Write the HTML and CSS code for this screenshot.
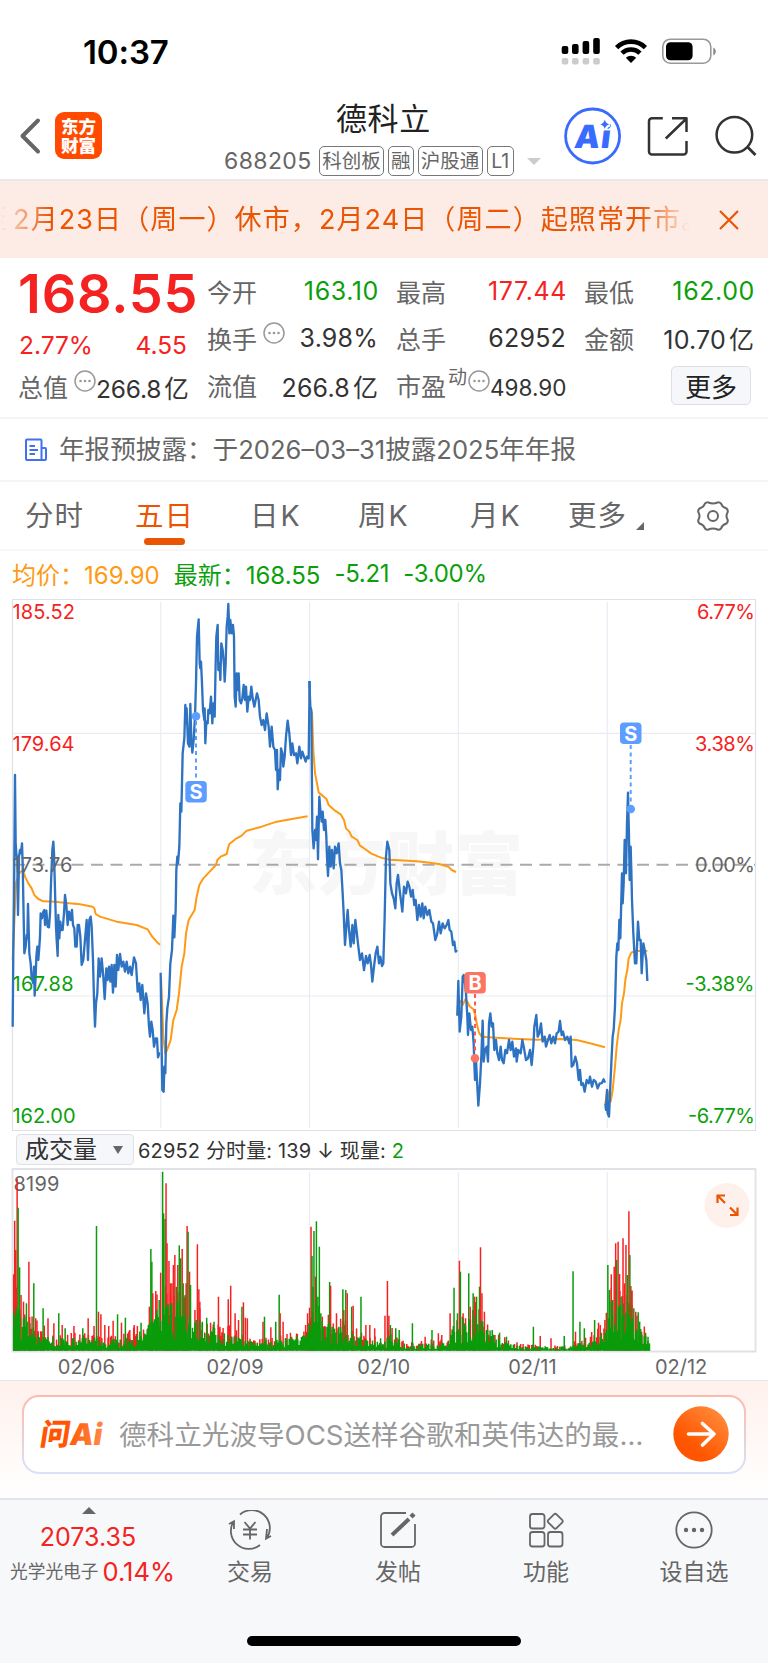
FILE: index.html
```html
<!DOCTYPE html>
<html lang="zh-CN">
<head>
<meta charset="utf-8">
<title>德科立 688205</title>
<link rel="stylesheet" href="styles.css">
</head>
<body>
<div class="status">
  <span class="clock">10:37</span>
  <svg class="status-icons" width="156" height="30" viewBox="0 0 156 30">
    <g fill="#000"><rect x="0.7" y="9" width="6.6" height="8" rx="2"/><rect x="11" y="7" width="6.6" height="10" rx="2"/><rect x="21.6" y="4" width="6.6" height="13" rx="2"/><rect x="32.2" y="1" width="6.6" height="16" rx="2"/></g>
    <g fill="#ccc"><rect x="0.7" y="21" width="6.6" height="6.6" rx="2"/><rect x="11" y="21" width="6.6" height="6.6" rx="2"/><rect x="21.6" y="21" width="6.6" height="6.6" rx="2"/><rect x="32.2" y="21" width="6.6" height="6.6" rx="2"/></g>
    <g fill="none" stroke="#000" stroke-width="4.6"><path d="M55.6 10.6a20.4 20.4 0 0 1 28.8 0"/><path d="M61 16.2a12.8 12.8 0 0 1 18 0"/></g>
    <path d="M70 26l-5.2-5.2a7.4 7.4 0 0 1 10.4 0z"/>
    <rect x="101.8" y="2.2" width="48" height="24" rx="7.5" fill="none" stroke="#999" stroke-width="1.6"/>
    <rect x="105" y="5.3" width="26.6" height="18" rx="4.5"/>
    <path d="M152.3 10.5c3.3 1.5 3.3 6.500 0 8z" fill="#888"/>
  </svg>
</div>

<header class="head">
  <svg class="back" width="24" height="38" viewBox="0 0 24 38"><path d="M19 3.500L3.500 19L19 34.500" fill="none" stroke="#666" stroke-width="4" stroke-linecap="round" stroke-linejoin="round"/></svg>
  <div class="brand"><span>东方</span><span>财富</span></div>
  <div class="title">
    <h1>德科立</h1>
    <div class="sub"><span class="code">688205</span><span class="tag">科创板</span><span class="tag t1">融</span><span class="tag">沪股通</span><span class="tag t2">L1</span><i class="caret"></i></div>
  </div>
  <svg class="head-icons" width="200" height="60" viewBox="0 0 200 60">
    <circle cx="34.600" cy="30" r="27" fill="none" stroke="#3a6bff" stroke-width="2.800"/>
    <g transform="translate(15.500 41.500) skewX(-7)"><text class="ai-text" x="0" y="0" textLength="36">Ai</text></g>
    <path d="M46.800 13.500q.9 3.900 4.600 4.800q-3.700.9-4.600 4.800q-.9-3.900-4.600-4.800q3.700-.9 4.600-4.800z" fill="#3a6bff" stroke="#fff" stroke-width="4.500" paint-order="stroke"/>
    <g fill="none" stroke="#333" stroke-width="2.500" stroke-linejoin="round"><path d="M104.800 12.300H94a3 3 0 0 0-3 3V45.500a3 3 0 0 0 3 3h31.500a3 3 0 0 0 3-3V35"/><path d="M114 12.300h14.500V26M128 13L107.800 32.500"/></g>
    <circle cx="176.400" cy="28.700" r="17.800" fill="none" stroke="#333" stroke-width="2.500"/><path d="M189 40.500l8.500 8.500" stroke="#333" stroke-width="2.800"/>
  </svg>
</header>

<div class="notice">
  <div class="marquee"><span class="lead">至</span>2月23日（周一）休市，2月24日（周二）起照常开市。</div>
  <svg width="22" height="22" viewBox="0 0 22 22"><path d="M2 2L20 20M20 2L2 20" stroke="#ea5504" stroke-width="2.200"/></svg>
</div>

<section class="quote">
  <div class="col main">
    <div class="price">168.55</div>
    <div class="chg"><span>2.77%</span><span>4.55</span></div>
    <div class="row"><label>总值</label><svg class="dots d1" viewBox="0 0 22 22"><use href="#more"/></svg><b class="tight">266.8<em>亿</em></b></div>
  </div>
  <div class="col">
    <div class="row"><label>今开</label><b class="g">163.10</b></div>
    <div class="row"><label>换手</label><svg class="dots d2" viewBox="0 0 22 22"><use href="#more"/></svg><b>3.98%</b></div>
    <div class="row"><label>流值</label><b>266.8<em>亿</em></b></div>
  </div>
  <div class="col">
    <div class="row"><label>最高</label><b class="r">177.44</b></div>
    <div class="row"><label>总手</label><b>62952</b></div>
    <div class="row"><label>市盈</label><sup>动</sup><svg class="dots d3" viewBox="0 0 22 22"><use href="#more"/></svg><b class="small">498.90</b></div>
  </div>
  <div class="col">
    <div class="row"><label>最低</label><b class="g">162.00</b></div>
    <div class="row"><label>金额</label><b>10.70<em>亿</em></b></div>
    <div class="row end"><button class="more">更多</button></div>
  </div>
  <svg width="0" height="0" class="defs"><symbol id="more" viewBox="0 0 22 22"><circle cx="11" cy="11" r="10" fill="none" stroke="#999" stroke-width="1.500"/><g fill="#999"><circle cx="6.500" cy="11" r="1.300"/><circle cx="11" cy="11" r="1.300"/><circle cx="15.500" cy="11" r="1.300"/></g></symbol></svg>
</section>

<div class="report">
  <svg width="24" height="24" viewBox="0 0 24 24" fill="none" stroke="#4370ee" stroke-width="2"><path d="M17.500 22V2.500a1 1 0 0 0-1-1H3a1 1 0 0 0-1 1V21a1 1 0 0 0 1 1H21a1 1 0 0 0 1-1V11a1 1 0 0 0-1-1H17.500"/><path d="M5.500 8H11M5.500 12H14M5.500 16H11"/></svg>
  <span>年报预披露：于2026–03–31披露2025年年报</span>
</div>

<nav class="tabs">
  <span class="w1">分时</span><span class="w2 on">五日</span><span class="w3">日K</span><span class="w4">周K</span><span class="w5">月K</span><span class="w6">更多<i></i></span>
  <svg width="34" height="34" viewBox="-17 -17 34 34" fill="none" stroke="#666" stroke-width="2"><circle r="5"/><path stroke-linejoin="round" d="M-4.500-13.500Q0-11.500 4.500-13.500Q6-14.500 8-12.500Q9.500-8.500 13.500-7.500Q15.500-5.500 14.500-3.500Q12.500 0 14.500 3.500Q15.500 5.500 13.500 7.500Q9.500 8.500 8 12.500Q6 14.500 4.500 13.500Q0 11.500-4.500 13.500Q-6 14.500-8 12.500Q-9.500 8.500-13.500 7.500Q-15.500 5.500-14.500 3.500Q-12.500 0-14.500-3.500Q-15.500-5.500-13.500-7.500Q-9.500-8.500-8-12.500Q-6-14.500-4.500-13.500Z"/></svg>
</nav>

<div class="legend"><span class="avg">均价：169.90</span><span>最新：168.55</span><span>-5.21</span><span>-3.00%</span></div>

<svg class="chart" width="768" height="534" viewBox="0 598 768 534">
  <g class="watermark"><text x="249" y="889" textLength="274">东方财富</text></g>
  <g class="grid"><path d="M160.800 602V1128M309.500 602V1128M458.300 602V1128M607.300 602V1128M12 733.400H755M12 996H755"/></g>
  <path class="frame" d="M12.500 599.500H755.500V1130.500H12.500Z"/>
  <path class="zero" d="M13 864.700H755"/>
  <g transform="translate(0 850) scale(.33333)">
    <path class="ma" d="M38 330L42 240L48 100L55 75L62 65L70 62L75 80L85 100L95 115L103 135L115 147L130 154L165 155L200 159L240 163L278 170L283 175L287 192L300 200L350 215L410 225L443 238L455 258L470 275L480 284"/>
    <path class="ma" d="M483 380L487 480L490 560L496 612L503 595L512 570L520 510L530 480L537 430L545 350L553 310L558 250L566 210L584 180L590 140L598 105L610 85L632 62L648 45L652 30L662 20L680 12L684 -5L688 -18L710 -35L725 -43L740 -58L785 -70L830 -85L880 -94L923 -101"/>
    <path class="px" d="M38 530L40 300L42 150L45 -225L47 -20L49 10L52 30L54 195L57 20L60 0L63 10L66 -20L68 40L70 150L73 310L77 290L80 255L82 265L84 162L88 310L92 340L95 385L100 400L102 350L104 437L107 380L109 320L112 290L115 330L118 290L120 260L122 190L126 205L130 185L133 180L135 225L139 182L143 230L147 232L150 190L153 100L157 0L160 -25L162 10L165 120L168 230L170 270L173 318L175 195L178 265L181 215L184 240L188 240L192 190L195 135L199 165L203 225L207 185L212 210L216 180L219 225L223 235L226 290L230 290L233 225L237 225L241 260L245 345L250 330L254 280L260 210L264 330L268 210L272 200L275 230L279 330L282 450L285 530L288 460L292 430L296 325L300 380L305 325L310 380L314 447L319 355L323 390L327 350L331 395L335 345L339 428L343 345L347 410L351 315L355 360L360 312L365 350L370 335L375 365L380 335L385 370L390 350L395 375L402 322L408 340L413 425L418 400L422 450L427 405L433 490L438 430L443 460L447 530L450 560L454 515L458 540L462 590L467 565L471 565L474 622L478 610L480 610"/>
    <path class="px" d="M482 368L485 600L487 720L491 725L493 650L496 670L499 520L502 475L507 440L511 340L516 300L520 197L523 262L527 180L529 60L532 20L534 40L538 -10L541 -140L544 -115L546 -200L548 -290L553 -335L556 -435L558 -380L560 -425L564 -320L568 -310L571 -438L574 -330L577 -292L581 -330L585 -400L588 -500L591 -640L596 -692L599 -560L601 -545L603 -565L606 -500L609 -420L613 -390L614 -425L616 -320L619 -385L623 -380L625 -420L629 -410L633 -460L637 -380L640 -440L644 -400L647 -560L649 -640L653 -675L655 -540L659 -560L661 -510L664 -620L668 -600L672 -555L674 -505L677 -560L680 -670L683 -700L685 -738L688 -650L691 -690L695 -650L699 -675L702 -640L704 -460L707 -430L710 -530L713 -480L716 -530L719 -450L723 -440L727 -455L731 -495L735 -450L738 -490L742 -415L746 -460L750 -450L754 -490L758 -455L763 -430L767 -450L771 -470L776 -450L780 -400L785 -375L790 -390L795 -360L800 -410L806 -370L810 -310L815 -370L820 -310L825 -300L828 -240L831 -300L833 -182L837 -240L840 -210L843 -305L847 -290L850 -250L854 -280L858 -340L863 -388L868 -350L873 -285L877 -320L882 -285L888 -290L892 -260L898 -310L903 -275L907 -295L912 -280L917 -265L921 -280L926 -275L929 -507"/>
  </g>
  <g transform="translate(300 850) scale(.33333)">
    <path class="ma" d="M36 -415L40 -300L45 -230L52 -195L56 -172L68 -163L80 -152L86 -135L105 -118L122 -107L132 -90L138 -65L148 -55L155 -40L172 -30L180 -13L195 -3L213 10L235 20L250 25L270 29L350 34L390 38L420 43L445 50L455 60L468 66"/>
    <path class="ma" d="M472 495L475 450L482 455L488 465L496 448L502 455L508 468L520 478L526 495L530 520L537 548L545 560L590 563L640 566L710 569L780 567L830 570L870 580L915 592"/>
    <path class="ma" d="M916 760L922 720L926 735L932 755L938 720L945 650L950 590L956 540L962 510L966 460L972 430L976 390L982 360L986 325L994 308L1005 303L1042 303"/>
    <path class="px" d="M28 -507L31 -430L34 -420L37 -60L41 -5L45 -60L48 -30L51 -100L54 28L57 -120L58 -160L61 -120L65 -85L68 -115L72 -60L76 -90L79 -40L81 20L84 78L88 -10L92 50L96 0L101 55L105 -10L110 10L116 -20L120 40L124 60L128 130L131 190L135 285L139 230L143 180L147 240L152 290L157 225L161 280L166 210L170 245L175 290L180 330L186 310L192 360L198 318L203 340L209 315L213 345L217 395L222 350L227 310L232 290L237 340L241 320L246 348L250 340L254 200L258 20L262 -25L268 0L271 100L276 130L281 145L286 175L290 100L294 75L299 120L304 160L307 185L312 110L318 130L323 95L328 110L333 140L338 120L343 165L347 150L352 210L357 165L362 200L367 160L371 205L376 170L382 195L388 180L394 215L399 220L406 270L411 255L417 215L422 250L428 220L434 235L440 225L445 210L449 240L454 245L459 285L463 275L467 305L471 300"/>
    <path class="px" d="M472 497L475 393L479 545L484 500L488 380L491 375L495 400L498 430L502 500L504 555L508 490L513 540L517 530L521 580L523 640L525 690L528 630L531 690L535 767L540 700L544 620L548 512L551 635L555 600L560 590L564 635L567 520L571 490L575 530L579 520L583 600L588 570L592 610L597 630L602 590L606 630L611 640L616 600L621 610L627 570L632 600L637 575L642 620L648 595L650 635L655 600L662 610L667 570L672 595L678 630L684 625L690 600L695 645L700 590L703 530L709 495L713 560L718 550L723 520L728 575L734 560L738 590L744 570L749 555L754 580L760 560L765 580L770 550L776 545L780 513L785 555L789 545L795 570L802 560L808 580L812 560L815 650L820 645L826 620L831 640L836 690L840 660L844 705L849 700L854 725L860 690L866 700L870 680L876 710L881 690L887 695L893 715L899 700L905 700L911 688L915 698"/>
    <path class="px" d="M916 760L918 780L921 720L923 790L927 800L930 730L934 640L938 560L941 540L945 470L949 320L952 280L955 300L958 210L961 265L966 70L968 160L971 100L974 -30L978 70L981 -80L984 -172L987 -40L989 90L992 -10L994 60L996 150L1000 250L1005 340L1009 340L1014 215L1018 270L1022 270L1025 370L1030 280L1034 300L1039 330L1042 393"/>
  </g>
  <g class="mark sell"><path d="M196 721V781"/><circle cx="196" cy="716.300" r="4.300"/><rect x="185.300" y="781" width="21.500" height="21.500" rx="4"/><text x="196" y="799">S</text></g>
  <g class="mark sell"><path d="M630.700 745V804"/><circle cx="630.700" cy="809" r="4.300"/><rect x="620" y="722.500" width="21.500" height="21.500" rx="4"/><text x="630.700" y="740.500">S</text></g>
  <g class="mark buy"><path d="M475 994V1054"/><circle cx="475" cy="1058.300" r="4.300"/><rect x="464.300" y="972" width="21.500" height="21.500" rx="4"/><text x="475" y="990">B</text></g>
  <g class="axis">
    <text class="r" x="12.500" y="618.500" textLength="62.500">185.52</text><text class="r" x="12.500" y="751" textLength="62">179.64</text><text class="n" x="12.500" y="871.500" textLength="60">173.76</text><text class="g" x="12.500" y="990.500" textLength="61">167.88</text><text class="g" x="12.500" y="1123" textLength="63">162.00</text>
    <text class="r" x="697" y="618.500" textLength="58">6.77%</text><text class="r" x="695" y="751" textLength="60">3.38%</text><text class="n" x="695" y="871.500" textLength="60">0.00%</text><text class="g" x="685.500" y="990.500" textLength="69">-3.38%</text><text class="g" x="688" y="1123" textLength="67">-6.77%</text>
  </g>
</svg>

<div class="volhead"><div class="select">成交量<i></i></div><span>62952 分时量: 139 ↓ 现量: <b>2</b></span></div>

<svg class="volume" width="768" height="186" viewBox="0 1168 768 186">
  <path class="vgrid" d="M160.800 1172V1351M309.500 1172V1351M458.300 1172V1351M607.300 1172V1351"/>
  <path class="frame2" d="M12.500 1169H755.500V1351.500H12.500Z"/>
  <text class="n" x="13.500" y="1190.500" textLength="46">8199</text>
  <g id="bars"></g>
  <circle cx="727" cy="1205.500" r="22.500" fill="#fef1eb"/>
  <path d="M717.500 1203V1195.500H725M717.500 1195.500L725 1203M730 1207.500L737.500 1215M737.500 1207.500V1215H730" fill="none" stroke="#ea5504" stroke-width="2.200"/>
</svg>
<div class="dates"><span>02/06</span><span>02/09</span><span>02/10</span><span>02/11</span><span>02/12</span></div>

<div class="aibar"><div class="aibox">
  <svg class="ailogo" width="74" height="50" viewBox="-3 -8 74 50"><defs><linearGradient id="lg"><stop offset=".4" stop-color="#ff5500"/><stop offset="1" stop-color="#ff8a45"/></linearGradient></defs><g transform="translate(4 28) skewX(-9)"><text class="ailogo-t" fill="url(#lg)" x="-3" y="0" textLength="62" lengthAdjust="spacingAndGlyphs">问Ai</text></g></svg>
  <span>德科立光波导OCS送样谷歌和英伟达的最…</span>
  <svg width="56" height="56" viewBox="0 0 56 56"><defs><linearGradient id="bg" x1=".3" y1=".7" x2=".9" y2="0"><stop offset="0" stop-color="#ff5500"/><stop offset="1" stop-color="#ff9040"/></linearGradient></defs><circle cx="28" cy="28" r="27.700" fill="url(#bg)"/><path d="M15.500 28H41M29.500 17.500L41 28L29.500 39" fill="none" stroke="#fff" stroke-width="3.600" stroke-linecap="round" stroke-linejoin="round"/></svg>
</div></div>

<footer class="foot">
  <div class="index"><i></i><strong>2073.35</strong><div>光学光电子<b>0.14%</b></div></div>
  <div class="item"><svg width="44" height="40" viewBox="-22 -20 44 40"><path d="M-10-15.500A18 18 0 0 1 16.500 8.500M21 6L16 8.700L17-1M10 15A18 18 0 0 1-16.500-8.500M-21-6L-16-8.700V-1"/><path d="M-5.500-8L0-1.500L5.500-8M0-1.500V9.500M-7-.5H7M-7 4.500H7"/></svg><span>交易</span></div>
  <div class="item"><svg width="44" height="40" viewBox="-22 -20 44 40"><path d="M8-17H-13.500a3.500 3.500 0 0 0-3.500 3.500V13.500a3.500 3.500 0 0 0 3.500 3.500H13.500a3.500 3.500 0 0 0 3.500-3.500V-6"/><path d="M-6 5L11-11" stroke-width="4"/><path d="M13-13L16-16" stroke-width="4.500"/></svg><span>发帖</span></div>
  <div class="item"><svg width="44" height="40" viewBox="-22 -20 44 40"><rect x="-16" y="-16" width="14.500" height="14.500" rx="2.500"/><rect x="-16" y="2" width="14.500" height="14.500" rx="2.500"/><rect x="2" y="2" width="14.500" height="14.500" rx="2.500"/><rect x="3.500" y="-14.500" width="11.500" height="11.500" rx="1.800" transform="rotate(45 9.250 -8.750)"/></svg><span>功能</span></div>
  <div class="item"><svg width="44" height="40" viewBox="-22 -20 44 40"><circle r="17.700"/><g fill="#666" stroke="none"><circle cx="-8" r="2.200"/><circle r="2.200"/><circle cx="8" r="2.200"/></g></svg><span>设自选</span></div>
  <div class="home"></div>
</footer>
<script src="volume.js"></script>
</body>
</html>
```
FILE: styles.css
```css
*{box-sizing:border-box}
body{margin:0;width:768px;height:1663px;overflow:hidden;background:#fff;color:#333;font-family:Inter,"Noto Sans CJK SC",sans-serif;font-weight:400}
svg{display:block;flex:none}
i,em{font-style:normal}
label,span,b,strong{white-space:nowrap}
.r{color:#f52222;fill:#f52222}
.g{color:#0c9f0c;fill:#0c9f0c}
.n{fill:#666}

.status{height:100px;display:flex;align-items:center;padding:3px 52px 0 83px;justify-content:space-between}
.clock{font-size:33px;font-weight:600;letter-spacing:-.1px;color:#000}
.status-icons{margin-right:-1px}

.head{height:81px;display:flex;align-items:flex-start;border-bottom:2px solid #e8e9ec}
.back{margin:17px 0 0 19px}
.brand{margin:12px 0 0 12px;width:47px;height:47px;border-radius:9px;background:#ff4a00;color:#fff;font-weight:900;font-size:17.500px;line-height:19px;display:flex;flex-direction:column;align-items:center;justify-content:center}
.title{width:306px;flex:none;margin-left:122px;display:flex;flex-direction:column}
h1{margin:-2px 0 0 112px;font-size:31px;line-height:42px;font-weight:400;color:#222;letter-spacing:.6px}
.sub{display:flex;align-items:center;height:30px;margin-top:6px;font-size:19px;color:#666}
.sub>*{flex:none}
.code{font-size:23px;letter-spacing:.4px;width:95px}
.tag{height:30px;line-height:28px;border:1px solid #777;border-radius:5px;width:65px;text-align:center;margin-right:4px;font-size:19.500px}
.t1{width:25.500px}
.t2{width:27.500px}
.caret{border:7px solid transparent;border-top-color:#ccc;border-bottom:0;margin-left:9px}
.head-icons{margin-left:28px;margin-top:6px}
.ai-text{font-family:Inter,sans-serif;font-weight:900;font-size:32px;fill:#3a6bff}

.notice{height:77px;background:#fdece5;display:flex;align-items:center;justify-content:space-between;padding-right:28px;color:#ea5504}
.marquee{width:690px;height:40px;line-height:40px;overflow:hidden;white-space:nowrap;font-size:27px;letter-spacing:1.100px;-webkit-mask-image:linear-gradient(90deg,transparent 0,#000 50px,#000 640px,transparent);mask-image:linear-gradient(90deg,transparent 0,#000 50px,#000 640px,transparent)}
.lead{margin-left:-20px;margin-right:5px}

.quote{height:161px;border-bottom:2px solid #f5f5f7;display:grid;grid-template-columns:170px 170px 169px 169px;column-gap:19px;padding:9px 0 0 19px}
.defs{position:absolute}
.col{display:flex;flex-direction:column}
.row{height:47.300px;display:flex;align-items:center;font-size:25px;color:#333}
.row label{color:#666;margin-left:-1px}
.row b{font-weight:400;margin-left:auto;letter-spacing:.2px;padding-top:1px}
.row em{margin-left:3px;letter-spacing:0}
.row .tight{font-size:24.500px;padding-top:3px;letter-spacing:-.2px}
.row .small{font-size:22.500px;padding-top:5px;letter-spacing:0}
.row .r,.row .g{letter-spacing:.6px;margin-right:-1px}
.row .r{color:#f52222}
.row .g{color:#0c9f0c}
.row sup{font-size:19px;line-height:20px;color:#666;align-self:flex-start;margin:6px 0 0 2px}
.dots{width:22px;height:22px;margin-bottom:9px;margin-left:6px}
.d3{margin-left:1px}
.price{height:54px;line-height:54px;font-size:54px;font-weight:600;color:#f52222;letter-spacing:.8px;margin-left:-1px}
.chg{height:41px;display:flex;justify-content:space-between;align-items:center;padding:7px 0 0;color:#f52222;font-size:24.500px;letter-spacing:0}
.main{padding-right:2px}
.end{justify-content:flex-end;padding-right:3px}
.more{width:80px;height:39px;padding:0 0 2px;border:1.500px solid #dcdfe5;border-radius:5px;background:#f6f7fa;font:26px Inter,"Noto Sans CJK SC",sans-serif;color:#222}

.report{height:63px;border-bottom:2px solid #f5f5f7;display:flex;align-items:center;padding-left:24px;font-size:25.600px;color:#666}
.report span{margin:-4px 0 0 11px}

.tabs{height:69px;border-bottom:2px solid #f7f7f7;display:flex;align-items:center;font-size:28.500px;color:#666}
.tabs span{position:relative;line-height:40px;letter-spacing:1px}
.w1{width:110px;margin-left:25px}
.w2{width:115px}
.on{color:#ea5504}
.on::after{content:"";position:absolute;left:9px;top:42px;width:41px;height:7px;border-radius:4px;background:#ea5504}
.tabs .w3,.tabs .w4,.tabs .w5{letter-spacing:2px}
.w3{width:108px}
.w4{width:112px}
.w5{width:98px}
.w6{width:128px}
.w6 i{position:absolute;left:68px;bottom:6px;border-left:8px solid transparent;border-bottom:8px solid #666}

.legend{height:47px;display:flex;align-items:center;gap:14px;padding:0 0 2px 12px;font-size:24px;color:#0c9f0c}
.legend span:nth-child(n+3){letter-spacing:-.3px}
.legend .avg{color:#ff9a14}

.chart,.volume{font-family:Inter,"Noto Sans CJK SC",sans-serif;font-size:20px}
.grid path,.vgrid{fill:none;stroke:#e8ebf2;stroke-width:1.200}
.frame{fill:none;stroke:#dfe1e6;stroke-width:1.200}
.zero{stroke:#aaa;stroke-width:2;stroke-dasharray:12 7.500}
.watermark text{font-family:"Noto Sans CJK SC",sans-serif;font-weight:900;font-size:68px;fill:#f7f7f7}
.px{fill:none;stroke:#2e72c2;stroke-width:7;stroke-linejoin:round}
.ma{fill:none;stroke:#ff9a14;stroke-width:6;stroke-linejoin:round}
.mark text{fill:#fff;font-weight:700;font-size:20px;text-anchor:middle}
.mark path{fill:none;stroke-width:2;stroke-dasharray:4 3.500}
.sell{fill:#5c9dff;stroke:none}
.sell path{stroke:#5c9dff}
.buy{fill:#fb7464}
.buy path{stroke:#fb5c50}

.volhead{height:36px;display:flex;align-items:center;padding:0 0 1px 16px;font-size:20px;color:#333;letter-spacing:.15px}
.volhead b{font-weight:400;color:#0c9f0c}
.select{width:118px;height:31px;line-height:27px;border:1.500px solid #dfe1e6;border-radius:4px;background:#f6f7fa;font-size:24px;letter-spacing:0;padding-left:8px;margin-right:4px;display:flex;align-items:center}
.select i{border:5px solid transparent;border-top:8px solid #666;border-bottom:0;margin-left:16px}
.frame2{fill:none;stroke:#dfe1e6;stroke-width:1.800}

.dates{height:26px;display:grid;grid-template-columns:repeat(5,148.700px);padding-left:12px;text-align:center;line-height:26px;font-size:20px;color:#666}

.aibar{height:118px;border-top:1.500px solid #e3e5ec;background:linear-gradient(#fff1ec,#fff);padding:13.500px 22px 0}
.aibox{height:79px;border:2px solid transparent;border-radius:17px;background:linear-gradient(#fff,#fff) padding-box,linear-gradient(#ffb8ac,#d7e3f8) border-box;display:flex;align-items:center;padding:0 15px 0 11px;color:#999;font-size:27.600px}
.aibox span{margin:-2px 0 0 10px;flex:1}
.ailogo-t{font-family:Inter,"Noto Sans CJK SC",sans-serif;font-weight:900;font-size:30px}

.foot{height:166px;border-top:2px solid #e2e4e8;background:#f7f8fa;display:grid;grid-template-columns:176px repeat(4,148px);position:relative}
.index{display:flex;flex-direction:column;align-items:center;color:#666}
.index i{border:7px solid transparent;border-bottom-color:#666;border-top:0;margin-top:7px;margin-left:1px}
.index strong{font-weight:400;font-size:25px;line-height:30px;color:#f52222;margin-top:8px}
.index div{display:flex;align-items:center;font-size:17.700px;line-height:34px;margin-left:9px;white-space:nowrap;margin-top:3px}
.index b{font-weight:400;font-size:25.500px;color:#f52222;margin-left:4px}
.item{display:flex;flex-direction:column;align-items:center;padding-top:10px;font-size:23px;line-height:34px;color:#666}
.item svg{fill:none;stroke:#666;stroke-width:1.800}
.item span{margin-top:5px}
.home{position:absolute;left:247px;top:136px;width:274px;height:10px;border-radius:5px;background:#000}
```
FILE: volume.js
```js
// Minute volume: x, top and colour of the bars that stand out, in half-pixel columns.
const spikes = `28,485,g 30,212,r 32,300,r 35,87,r 37,173,g 40,352,g 43,435,r 48,455,r 54,460,g 59,335,r 61,520,g 69,400,g 73,505,r 88,475,g 98,505,r 110,520,r 120,490,g 127,525,r 133,535,g 151,528,r 169,535,g 180,505,r 192,528,r 197,228,g 201,485,r 206,493,r 214,525,r 222,528,r 231,512,r 240,493,g 248,518,r 256,503,g 265,540,r 274,525,r 288,518,g 302,535,r 305,470,r 308,297,g 310,335,g 312,430,r 318,423,r 320,480,g 325,450,g 328,368,r 332,65,g 334,190,g 337,207,g 339,100,r 341,280,r 345,333,r 348,400,r 351,400,r 354,345,r 357,315,r 360,410,g 363,345,r 366,286,g 369,325,g 372,297,r 374,400,g 378,435,g 380,400,r 382,228,r 384,245,g 387,365,r 389,405,g 398,480,r 403,283,r 406,418,r 408,455,r 413,515,g 422,503,g 430,518,r 437,515,g 446,440,r 449,530,r 466,448,r 471,407,r 480,490,r 487,510,r 494,470,g 497,457,r 501,503,r 505,505,r 537,515,r 540,500,g 553,532,r 563,515,g 570,434,g 572,490,r 578,515,r 586,552,r 607,552,r 624,525,r 628,490,r 632,473,r 635,230,r 637,318,g 639,410,g 641,243,g 644,380,r 646,214,g 649,440,g 652,290,g 655,490,g 658,500,r 664,530,r 668,530,g 673,396,g 675,407,r 678,530,g 687,490,r 692,530,g 700,418,g 702,480,r 706,420,g 709,430,r 718,470,g 721,467,r 737,440,g 747,525,r 755,525,r 765,535,r 777,565,g 786,497,r 791,393,r 794,497,r 797,525,g 808,535,g 815,540,g 842,520,g 868,560,r 882,540,g 895,550,r 902,555,r 919,490,r 927,413,g 934,490,g 938,332,r 940,365,g 944,500,r 948,520,g 957,370,g 960,470,r 966,430,g 969,440,r 973,440,g 979,410,g 981,292,r 984,430,r 989,485,r 993,540,g 1005,540,g 1020,548,g 1034,560,g 1089,530,g 1103,558,r 1125,565,r 1152,558,g 1170,364,g 1175,545,r 1184,515,g 1193,535,g 1214,510,g 1222,518,r 1235,510,r 1241,345,g 1244,420,g 1248,373,r 1251,450,g 1254,350,r 1257,280,r 1259,330,g 1262,275,r 1265,372,r 1268,440,g 1272,265,r 1275,400,r 1278,285,r 1281,375,g 1284,184,r 1286,315,g 1290,465,r 1294,475,g 1298,485,r 1303,487,g 1306,515,g 1310,545,r 1318,548,g 1323,560,g 1326,580,g`;
// Typical volume level through the session.
const level = [[28,150],[60,70],[90,50],[130,35],[200,35],[250,30],[300,60],[320,110],[340,130],[385,130],[395,90],[440,60],[520,25],[560,35],[620,40],[645,140],[660,80],[720,50],[780,20],[800,50],[830,15],[910,25],[930,80],[980,100],[990,70],[1020,30],[1070,12],[1160,12],[1200,30],[1235,60],[1245,130],[1285,140],[1295,100],[1315,50],[1326,30]];
const S = 768 / 1568, base = 1350.7;
function at(x) {
  for (let i = 1; i < level.length; i++) {
    const [a, ya] = level[i - 1], [b, yb] = level[i];
    if (x <= b) return ya + (yb - ya) * (x - a) / (b - a);
  }
  return 20;
}
let seed = 7;
const rnd = () => (seed = (seed * 16807) % 2147483647) / 2147483647;
const d = { r: "", g: "" };
const bar = (x, h, c) => { d[c] += `M${(x * S).toFixed(2)} ${base}v${(-h / 3).toFixed(1)}`; };
for (let x = 28; x < 1326; x += 2.5) {
  const l = at(x);
  if (rnd() < .5) bar(x, l * (.7 + rnd() * .9), "r");
  bar(x, l * (.25 + rnd() * .9), "g");
}
const svg = (c, p) => `<path d="${p}" stroke="${c}" stroke-width="1.500" fill="none"/>`;
let tall = "";
for (const s of spikes.split(" ")) {
  const [x, y, c] = s.split(",");
  tall += svg(c === "r" ? "#f52222" : "#0a9b0a", `M${(x * S).toFixed(2)} ${base}V${(1150 + y / 3).toFixed(1)}`);
}
document.getElementById("bars").innerHTML = svg("#f52222", d.r) + tall + svg("#0a9b0a", d.g);
```
